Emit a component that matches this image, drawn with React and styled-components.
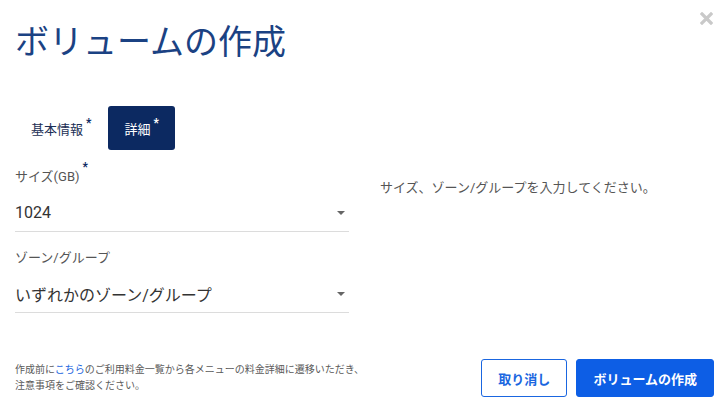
import React, { useState } from 'react';
import styled, { createGlobalStyle } from 'styled-components';

const GlobalStyle = createGlobalStyle`
    body {
        margin: 0;
        background: #fff;
        font-family: Roboto, "Noto Sans CJK JP", sans-serif;
    }
`;

const Dialog = styled.div`
    position: relative;
    box-sizing: border-box;
    width: 724px;
    height: 408px;
    padding: 22px 10px 0 15px;
    display: flex;
    flex-direction: column;
`;

const Title = styled.h1`
    margin: 0;
    font-size: 34px;
    font-weight: 400;
    line-height: 40px;
    color: #1b4283;
`;

const CloseButton = styled.button`
    position: absolute;
    top: 10px;
    right: 10px;
    width: 16px;
    height: 16px;
    padding: 0;
    border: none;
    background: none;
    cursor: pointer;
    display: flex;
    align-items: center;
    justify-content: center;
`;

const Tabs = styled.div`
    display: flex;
    margin-top: 44px;
    gap: 1px;
`;

const Tab = styled.button`
    height: 44px;
    padding: 0 16px;
    border: none;
    border-radius: 3px;
    font-family: inherit;
    font-size: 13px;
    cursor: pointer;
    background: ${props => (props.active ? '#0c2961' : 'transparent')};
    color: ${props => (props.active ? '#fff' : '#1c2f55')};
    display: flex;
    align-items: center;
`;

const Star = styled.sup`
    font-size: 12px;
    font-weight: 700;
    line-height: 0;
    margin-left: 3px;
    position: relative;
    top: -5px;
    color: ${props => (props.light ? '#fff' : '#0c2961')};
`;

const Body = styled.div`
    display: grid;
    grid-template-columns: 334px 1fr;
    column-gap: 31px;
    margin-top: 18px;
`;

const Fields = styled.div`
    display: flex;
    flex-direction: column;
    gap: 17px;
`;

const Field = styled.div`
    display: flex;
    flex-direction: column;
    gap: 9px;
`;

const Label = styled.label`
    font-size: 13px;
    line-height: 18px;
    color: #555;
`;

const Select = styled.div`
    height: 35px;
    border-bottom: 1px solid #dcdcdc;
    display: flex;
    align-items: center;
    justify-content: space-between;
    font-size: 16px;
    color: #333;
    padding-bottom: 1px;
    cursor: pointer;
`;

const Caret = styled.span`
    width: 0;
    height: 0;
    margin-right: 4px;
    border-left: 4px solid transparent;
    border-right: 4px solid transparent;
    border-top: 4px solid #666;
`;

const Hint = styled.p`
    margin: 11px 0 0;
    font-size: 13px;
    line-height: 18px;
    color: #555;
`;

const Footer = styled.div`
    margin-top: auto;
    margin-bottom: 11px;
    display: flex;
    align-items: center;
    justify-content: space-between;
`;

const Note = styled.p`
    margin: 0;
    font-size: 10px;
    line-height: 16px;
    color: #5a5a5a;

    a {
        color: #1a66e0;
        text-decoration: none;
    }
`;

const Buttons = styled.div`
    display: flex;
    gap: 9px;
`;

const Button = styled.button`
    height: 38px;
    padding: 0 16px;
    border-radius: 3px;
    font-family: inherit;
    font-size: 13px;
    font-weight: 700;
    cursor: pointer;
    border: 1px solid #1a66e0;
    background: ${props => (props.primary ? '#0d5ee5' : '#fff')};
    color: ${props => (props.primary ? '#fff' : '#1a66e0')};
    border-color: ${props => (props.primary ? '#0d5ee5' : '#1a66e0')};
`;

const App = () => {

    const [tab, setTab] = useState('detail');

    return (
        <Dialog>
            <GlobalStyle />
            <Title>ボリュームの作成</Title>
            <CloseButton aria-label='close'>
                <svg width='13' height='13' viewBox='0 0 13 13'>
                    <path d='M2 2 L11 11 M11 2 L2 11' stroke='#c9c9c9' strokeWidth='3.2' strokeLinecap='square' />
                </svg>
            </CloseButton>

            <Tabs>
                <Tab active={tab === 'basic'} onClick={() => setTab('basic')}>
                    基本情報<Star light={tab === 'basic'}>*</Star>
                </Tab>
                <Tab active={tab === 'detail'} onClick={() => setTab('detail')}>
                    詳細<Star light={tab === 'detail'}>*</Star>
                </Tab>
            </Tabs>

            <Body>
                <Fields>
                    <Field>
                        <Label>サイズ(GB)<Star>*</Star></Label>
                        <Select>
                            <span>1024</span>
                            <Caret />
                        </Select>
                    </Field>
                    <Field>
                        <Label>ゾーン/グループ</Label>
                        <Select>
                            <span>いずれかのゾーン/グループ</span>
                            <Caret />
                        </Select>
                    </Field>
                </Fields>
                <Hint>サイズ、ゾーン/グループを入力してください。</Hint>
            </Body>

            <Footer>
                <Note>
                    作成前に<a href='#'>こちら</a>のご利用料金一覧から各メニューの料金詳細に遷移いただき、<br />
                    注意事項をご確認ください。
                </Note>
                <Buttons>
                    <Button>取り消し</Button>
                    <Button primary>ボリュームの作成</Button>
                </Buttons>
            </Footer>
        </Dialog>
    );
};

export default App;
